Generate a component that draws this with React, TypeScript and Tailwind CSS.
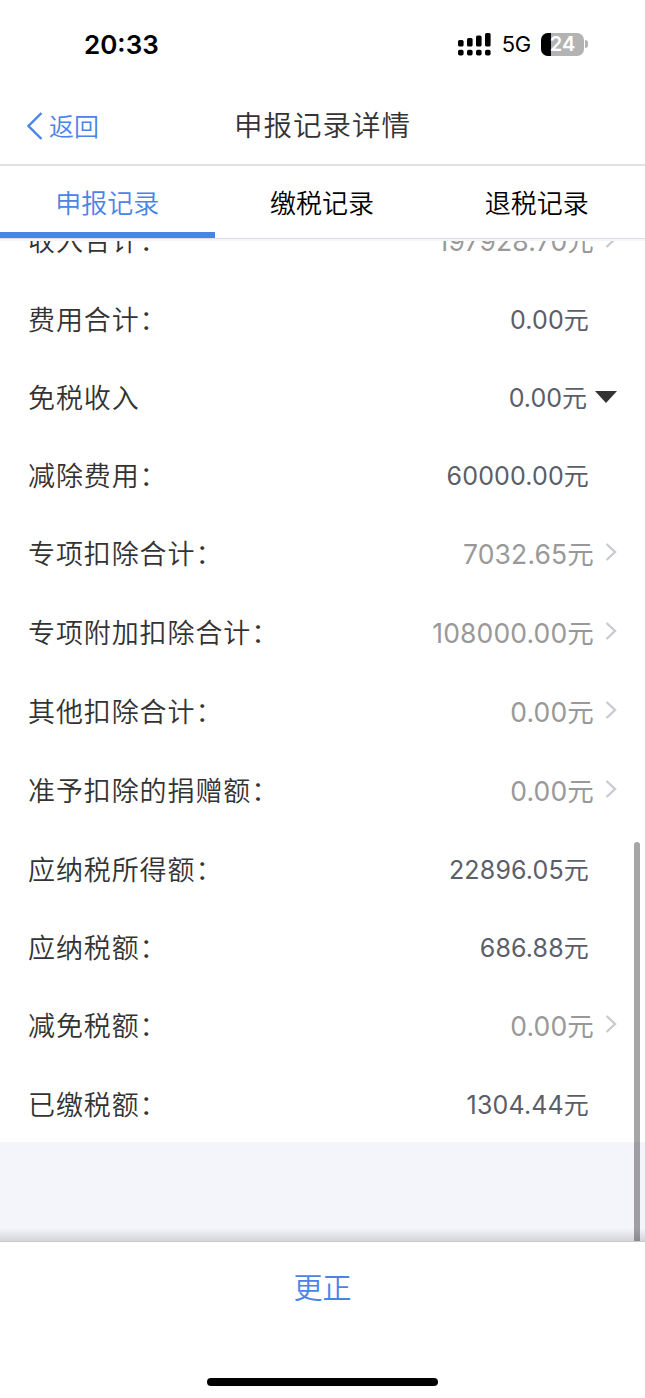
import React from "react";
import clsx from "clsx";

type RowKind = "plain" | "link" | "expand";

interface RecordRow {
  label: string;
  amount: string;
  kind: RowKind;
}

const rows: RecordRow[] = [
  { label: "收入合计：", amount: "197928.70", kind: "link" },
  { label: "费用合计：", amount: "0.00", kind: "plain" },
  { label: "免税收入", amount: "0.00", kind: "expand" },
  { label: "减除费用：", amount: "60000.00", kind: "plain" },
  { label: "专项扣除合计：", amount: "7032.65", kind: "link" },
  { label: "专项附加扣除合计：", amount: "108000.00", kind: "link" },
  { label: "其他扣除合计：", amount: "0.00", kind: "link" },
  { label: "准予扣除的捐赠额：", amount: "0.00", kind: "link" },
  { label: "应纳税所得额：", amount: "22896.05", kind: "plain" },
  { label: "应纳税额：", amount: "686.88", kind: "plain" },
  { label: "减免税额：", amount: "0.00", kind: "link" },
  { label: "已缴税额：", amount: "1304.44", kind: "plain" },
];

const tabs = ["申报记录", "缴税记录", "退税记录"];

const SignalIcon = () => (
  <svg width="33" height="23" viewBox="0 0 33 23" fill="black">
    <rect x="0" y="7" width="5.6" height="6.5" rx="1.6" />
    <rect x="9" y="5" width="5.6" height="8.5" rx="1.6" />
    <rect x="18" y="2.6" width="5.6" height="10.9" rx="1.6" />
    <rect x="27" y="0" width="5.6" height="13.5" rx="1.6" />
    <rect x="0" y="16.8" width="5.6" height="5.8" rx="1.8" />
    <rect x="9" y="16.8" width="5.6" height="5.8" rx="1.8" />
    <rect x="18" y="16.8" width="5.6" height="5.8" rx="1.8" />
    <rect x="27" y="16.8" width="5.6" height="5.8" rx="1.8" />
  </svg>
);

const Battery = () => (
  <div className="flex items-center gap-[1px]">
    <div className="relative flex h-[23px] w-[43px] items-center justify-center overflow-hidden rounded-[7px] bg-[#b3b3b3]">
      <div className="absolute inset-y-0 left-0 w-[10px] bg-black" />
      <span className="relative text-[20px] leading-none font-semibold text-white">24</span>
    </div>
    <div className="h-[8px] w-[3px] rounded-r-full bg-[#b3b3b3]" />
  </div>
);

const StatusBar = () => (
  <div className="flex h-[88px] items-center justify-between pr-[57px] pl-[84px]">
    <span className="pt-[1px] text-[26px] leading-none font-semibold">20:33</span>
    <div className="flex items-center">
      <SignalIcon />
      <span className="mr-[10px] ml-[11px] text-[22px] leading-none tracking-[-0.3px]">5G</span>
      <Battery />
    </div>
  </div>
);

const NavBar = () => (
  <div className="grid h-[78px] grid-cols-3 items-center border-b-2 border-[#e2e2e4] pl-[27px]">
    <button className="flex items-center gap-[6px] text-[25px] leading-none font-[350] text-[#4a84e8]">
      <svg width="16" height="28" viewBox="0 0 16 28" fill="none" stroke="currentColor" strokeWidth="2.4">
        <path d="M14.5 1 1.5 14l13 13" />
      </svg>
      <span className="pt-[2px]">返回</span>
    </button>
    <h1 className="-ml-[27px] pt-[1px] text-center text-[28.5px] leading-none font-[350] tracking-[1px] whitespace-nowrap text-[#333]">
      申报记录详情
    </h1>
  </div>
);

const Tabs = () => (
  <div className="grid h-[73px] grid-cols-3 border-b border-[#dfdfe2] pr-[1px]">
    {tabs.map((tab, i) => (
      <button
        key={tab}
        className={clsx(
          "flex items-center justify-center border-b-[6px] pt-[9px] text-[26px] leading-none font-[350]",
          i === 0 ? "border-[#4a84e8] text-[#4a84e8]" : "border-transparent text-black"
        )}
      >
        {tab}
      </button>
    ))}
  </div>
);

const Row = ({ label, amount, kind }: RecordRow) => (
  <div
    className={clsx(
      "flex shrink-0 items-center justify-between px-[28px] pt-[4px]",
      kind === "link" ? "h-[79px]" : "h-[78px]"
    )}
  >
    <span className="text-[27px] leading-none font-[350] tracking-[0.9px] text-[#333]">{label}</span>
    {kind === "link" && (
      <span className="flex items-center text-[26.5px] leading-none tracking-[0.15px] text-[#999]">
        {amount}元
        <svg className="-mt-[5px] ml-[11px]" width="12" height="18" viewBox="0 0 12 18" fill="none" stroke="#c9cbd0" strokeWidth="2.4">
          <path d="m1.5 1 8.5 8-8.5 8" />
        </svg>
      </span>
    )}
    {kind === "plain" && (
      <span className="pr-[28px] text-[25px] leading-none tracking-[0.15px] text-[#5b5d69]">{amount}元</span>
    )}
    {kind === "expand" && (
      <span className="flex items-center gap-[8px] text-[25px] leading-none text-[#5b5d69]">
        {amount}元
        <svg className="-mt-[2px]" width="22" height="12" viewBox="0 0 22 12" fill="#333">
          <path d="M0 0h22L11 12z" />
        </svg>
      </span>
    )}
  </div>
);

const App = () => {
  return (
    <div className="flex h-[1398px] w-[645px] flex-col overflow-hidden bg-white font-['Inter','Noto_Sans_CJK_SC',sans-serif]">
      <StatusBar />
      <NavBar />
      <Tabs />

      <div className="h-[2px] bg-[#f4f5fa]" />
      <div className="relative flex h-[1000px] flex-col overflow-hidden bg-[#f4f5fa]">
        <div className="-mt-[41px] flex flex-col bg-white">
          {rows.map((row) => (
            <Row key={row.label} {...row} />
          ))}
        </div>
        <div className="absolute right-[5px] bottom-0 h-[399px] w-[6px] rounded-t-full bg-black/35" />
        <div className="absolute inset-x-0 bottom-0 h-[13px] bg-linear-to-b from-transparent to-black/13" />
      </div>

      <div className="flex flex-1 flex-col items-center justify-between border-t border-[#c8c8cb] pt-[32px] pb-[12px]">
        <button className="text-[29px] leading-none font-[350] text-[#4a84e8]">更正</button>
        <div className="h-[8px] w-[231px] rounded-full bg-black" />
      </div>
    </div>
  );
};

export default App;
